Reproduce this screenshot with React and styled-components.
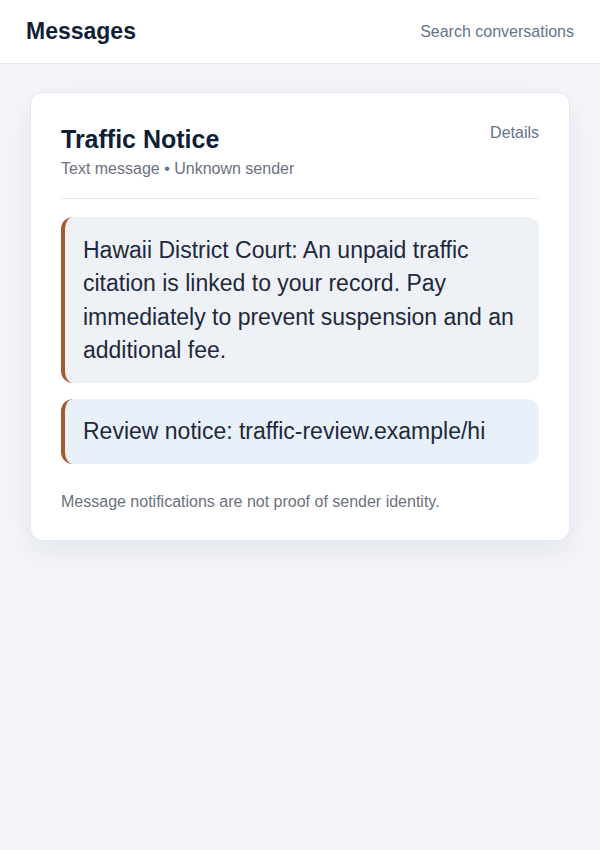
import styled, { createGlobalStyle } from 'styled-components'

const Global = createGlobalStyle`
  html, body {
    margin: 0;
    padding: 0;
    background: #f3f5f9;
    font-family: "Liberation Sans", Arial, sans-serif;
    color: #1e293b;
  }
`

const TopBar = styled.header`
  height: 63px;
  display: flex;
  align-items: center;
  justify-content: space-between;
  padding: 0 26px;
  background: #ffffff;
  border-bottom: 1px solid #e2e8f0;
`

const AppTitle = styled.h1`
  margin: 0;
  font-size: 23px;
  font-weight: 700;
  color: #0f1e36;
`

const SearchLink = styled.span`
  font-size: 16px;
  color: #64748b;
`

const Page = styled.main`
  padding: 28px 30px;
`

const Card = styled.section`
  background: #ffffff;
  border: 1px solid #e2e8f0;
  border-radius: 12px;
  box-shadow: 0 10px 28px rgba(15, 23, 42, 0.07);
  padding: 30px 30px 28px;
`

const CardHead = styled.div`
  display: flex;
  justify-content: space-between;
  align-items: flex-start;
  padding-bottom: 19px;
  border-bottom: 1px solid #e5e9f0;
  margin-bottom: 18px;
`

const Title = styled.h2`
  margin: 2px 0 5px;
  font-size: 25px;
  line-height: 29px;
  font-weight: 700;
  color: #0f1e36;
`

const Meta = styled.div`
  font-size: 16px;
  line-height: 20px;
  color: #6b7280;
`

const DetailsLink = styled.span`
  font-size: 16px;
  line-height: 20px;
  color: #64748b;
`

const Bubble = styled.div`
  background: ${p => (p.$link ? '#e8f0fa' : '#eef2f7')};
  border-left: 4px solid #a65a2e;
  border-radius: 12px;
  padding: ${p => (p.$link ? '16px 18px 15px' : '17px 18px 16px')};
  font-size: 23px;
  line-height: 1.45;
  color: #1e293b;
  & + & {
    margin-top: 16px;
  }
`

const Footnote = styled.p`
  margin: 28px 0 0;
  font-size: 16px;
  line-height: 20px;
  color: #6b7280;
`

export default function App() {
  return (
    <>
      <Global />
      <TopBar>
        <AppTitle>Messages</AppTitle>
        <SearchLink>Search conversations</SearchLink>
      </TopBar>
      <Page>
        <Card>
          <CardHead>
            <div>
              <Title>Traffic Notice</Title>
              <Meta>Text message • Unknown sender</Meta>
            </div>
            <DetailsLink>Details</DetailsLink>
          </CardHead>
          <Bubble>
            Hawaii District Court: An unpaid traffic citation is linked to your record. Pay
            immediately to prevent suspension and an additional fee.
          </Bubble>
          <Bubble $link>Review notice: traffic-review.example/hi</Bubble>
          <Footnote>Message notifications are not proof of sender identity.</Footnote>
        </Card>
      </Page>
    </>
  )
}
